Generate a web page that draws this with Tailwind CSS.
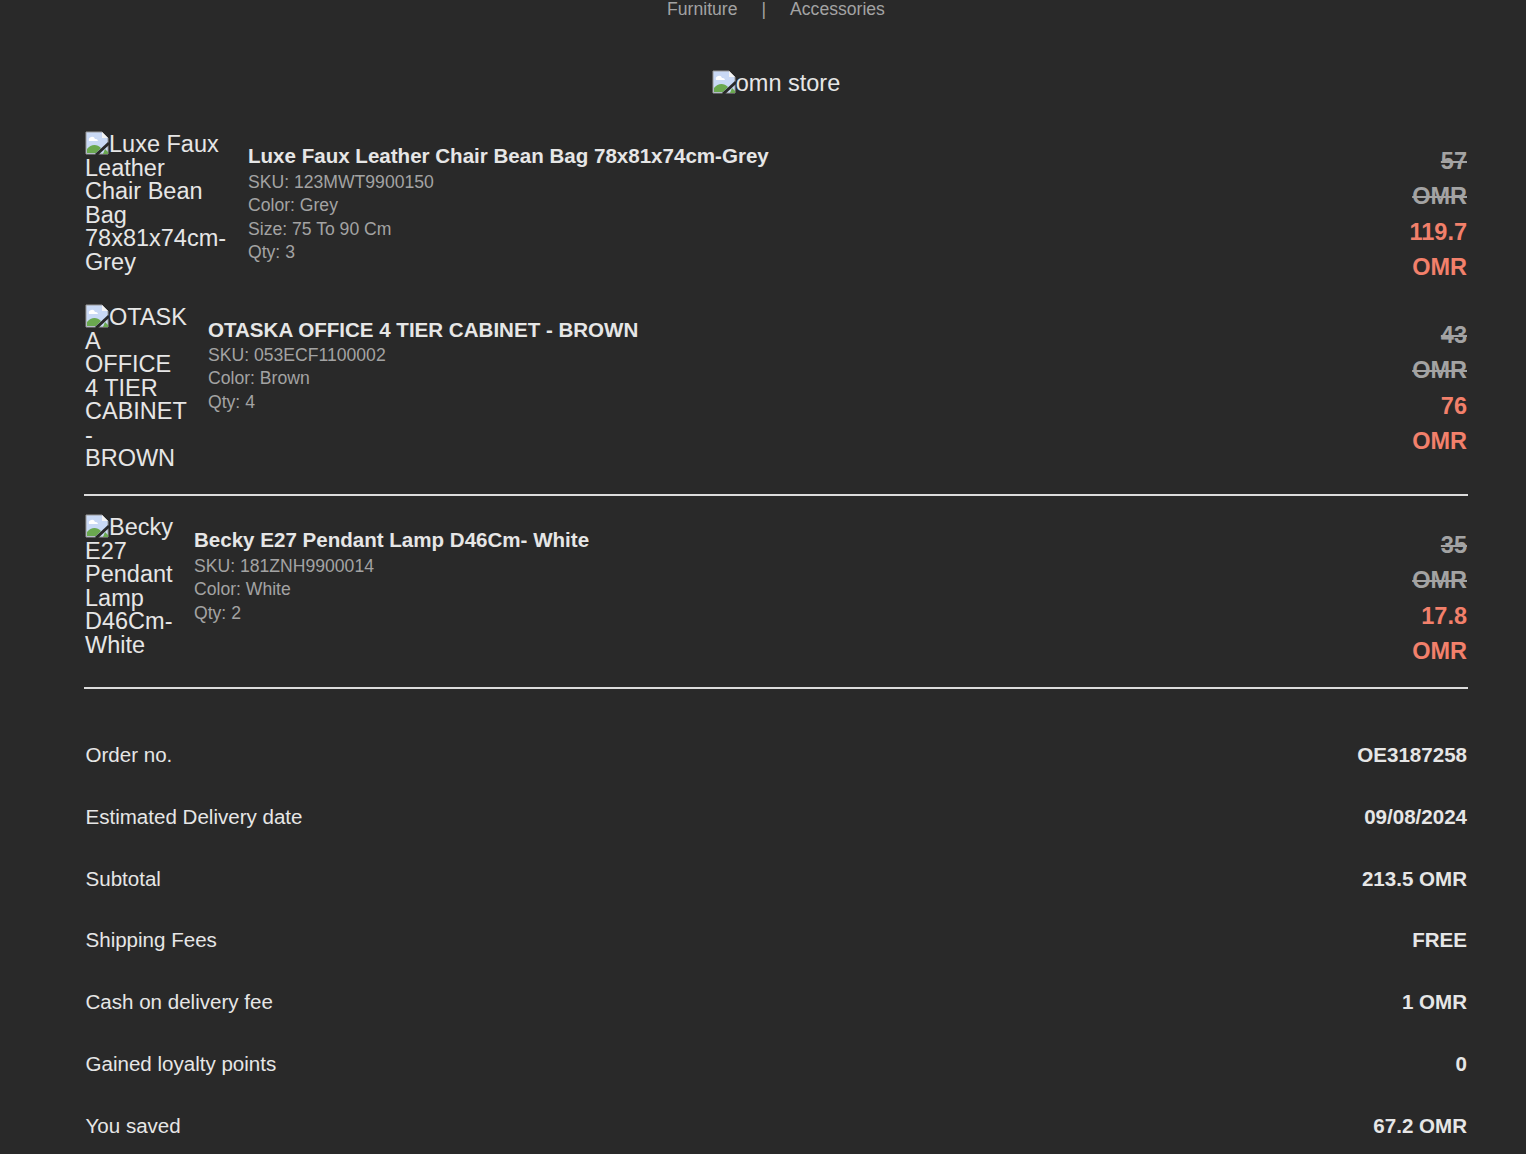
<!DOCTYPE html>
<html lang="en">
<head>
    <meta charset="UTF-8">
    <meta name="viewport" content="width=device-width, initial-scale=1.0">
    <title>Order summary</title>
    <script src="https://cdn.jsdelivr.net/npm/@tailwindcss/browser@4"></script>
</head>
<body class="bg-[#292929] font-['Liberation_Sans',Arial,sans-serif] h-[1154px] overflow-hidden">
    <div class="pl-[84px] pr-[58px]">
        <!-- nav -->
        <div class="flex justify-center text-[17.6px] leading-[18px] text-[#a3a3a3] h-[18px]">
            <span>Furniture</span>
            <span class="mx-[24px]">|</span>
            <span>Accessories</span>
        </div>

        <!-- logo -->
        <div class="mt-[52px] flex justify-center text-[23.5px] leading-[27px] text-[#e6e6e6] h-[27px]">
            <span><svg class="inline-block align-[-3px] w-[24px] h-[24px]" viewBox="0 0 24 24"><path d="M1 1H17L23 7V23H1Z" fill="#c9d9f5" stroke="#9a9a9a"/><path d="M17 1V7H23Z" fill="#f4f4f4"/><path d="M4 10a3 3 0 0 1 6-2 2.500 2.500 0 0 1 3 2Z" fill="#fff"/><path d="M2 22V18C6 13 12 13 16 17L11 22Z" fill="#6aa84f"/><path d="M20 18L23 21V23H18Z" fill="#6aa84f"/><path d="M11 24L24 12" stroke="#292929" stroke-width="3"/></svg>omn store</span>
        </div>

        <!-- items -->
        <div class="mt-[34px] flex items-start pl-[1px] pr-[1px] h-[175px]">
            <div class="w-[142px] mr-[21px] shrink-0 text-[23.5px] leading-[23.5px] text-[#e6e6e6]"><svg class="inline-block align-[-3px] w-[24px] h-[24px]" viewBox="0 0 24 24"><path d="M1 1H17L23 7V23H1Z" fill="#c9d9f5" stroke="#9a9a9a"/><path d="M17 1V7H23Z" fill="#f4f4f4"/><path d="M4 10a3 3 0 0 1 6-2 2.500 2.500 0 0 1 3 2Z" fill="#fff"/><path d="M2 22V18C6 13 12 13 16 17L11 22Z" fill="#6aa84f"/><path d="M20 18L23 21V23H18Z" fill="#6aa84f"/><path d="M11 24L24 12" stroke="#292929" stroke-width="3"/></svg>Luxe Faux Leather Chair Bean Bag 78x81x74cm-Grey</div>
            <div class="flex-1 pt-[12px]">
                <div class="text-[20.55px] leading-[25px] font-bold text-[#e6e6e6]">Luxe Faux Leather Chair Bean Bag 78x81x74cm-Grey</div>
                <div class="text-[17.6px] leading-[23.4px] text-[#a3a3a3] mt-[3px]">
                    <div>SKU: 123MWT9900150</div>
                    <div>Color: Grey</div>
                    <div>Size: 75 To 90 Cm</div>
                    <div>Qty: 3</div>
                </div>
            </div>
            <div class="pt-[13px] text-right font-bold text-[23.5px] leading-[35.3px]">
                <div class="line-through text-[#a3a3a3]">57<br>OMR</div>
                <div class="text-[#f2806b]">119.7<br>OMR</div>
            </div>
        </div>

        <div class="flex items-start pl-[1px] pr-[1px] h-[190px] border-b-2 border-[#dcdcdc]">
            <div class="w-[102px] mr-[21px] mt-[-2px] shrink-0 text-[23.5px] leading-[23.5px] text-[#e6e6e6]"><svg class="inline-block align-[-3px] w-[24px] h-[24px]" viewBox="0 0 24 24"><path d="M1 1H17L23 7V23H1Z" fill="#c9d9f5" stroke="#9a9a9a"/><path d="M17 1V7H23Z" fill="#f4f4f4"/><path d="M4 10a3 3 0 0 1 6-2 2.500 2.500 0 0 1 3 2Z" fill="#fff"/><path d="M2 22V18C6 13 12 13 16 17L11 22Z" fill="#6aa84f"/><path d="M20 18L23 21V23H18Z" fill="#6aa84f"/><path d="M11 24L24 12" stroke="#292929" stroke-width="3"/></svg>OTASK<wbr>A OFFICE 4 TIER CABINET - BROWN</div>
            <div class="flex-1 pt-[11px]">
                <div class="text-[20.55px] leading-[25px] font-bold text-[#e6e6e6]">OTASKA OFFICE 4 TIER CABINET - BROWN</div>
                <div class="text-[17.6px] leading-[23.4px] text-[#a3a3a3] mt-[2px]">
                    <div>SKU: 053ECF1100002</div>
                    <div>Color: Brown</div>
                    <div>Qty: 4</div>
                </div>
            </div>
            <div class="pt-[12px] text-right font-bold text-[23.5px] leading-[35.3px]">
                <div class="line-through text-[#a3a3a3]">43<br>OMR</div>
                <div class="text-[#f2806b]">76<br>OMR</div>
            </div>
        </div>

        <div class="flex items-start pt-[20px] pl-[1px] pr-[1px] h-[193px] border-b-2 border-[#dcdcdc]">
            <div class="w-[88px] mr-[21px] mt-[-2px] shrink-0 text-[23.5px] leading-[23.5px] text-[#e6e6e6]"><svg class="inline-block align-[-3px] w-[24px] h-[24px]" viewBox="0 0 24 24"><path d="M1 1H17L23 7V23H1Z" fill="#c9d9f5" stroke="#9a9a9a"/><path d="M17 1V7H23Z" fill="#f4f4f4"/><path d="M4 10a3 3 0 0 1 6-2 2.500 2.500 0 0 1 3 2Z" fill="#fff"/><path d="M2 22V18C6 13 12 13 16 17L11 22Z" fill="#6aa84f"/><path d="M20 18L23 21V23H18Z" fill="#6aa84f"/><path d="M11 24L24 12" stroke="#292929" stroke-width="3"/></svg>Becky E27 Pendant Lamp D46Cm-White</div>
            <div class="flex-1 pt-[11px]">
                <div class="text-[20.55px] leading-[25px] font-bold text-[#e6e6e6]">Becky E27 Pendant Lamp D46Cm- White</div>
                <div class="text-[17.6px] leading-[23.4px] text-[#a3a3a3] mt-[3px]">
                    <div>SKU: 181ZNH9900014</div>
                    <div>Color: White</div>
                    <div>Qty: 2</div>
                </div>
            </div>
            <div class="pt-[12px] text-right font-bold text-[23.5px] leading-[35.3px]">
                <div class="line-through text-[#a3a3a3]">35<br>OMR</div>
                <div class="text-[#f2806b]">17.8<br>OMR</div>
            </div>
        </div>

        <!-- summary -->
        <div class="mt-[35px] pl-[1.5px] pr-[1px] text-[20.55px] leading-[61.8px] text-[#e6e6e6]">
            <div class="flex justify-between"><span>Order no.</span><span class="font-bold">OE3187258</span></div>
            <div class="flex justify-between"><span>Estimated Delivery date</span><span class="font-bold">09/08/2024</span></div>
            <div class="flex justify-between"><span>Subtotal</span><span class="font-bold">213.5 OMR</span></div>
            <div class="flex justify-between"><span>Shipping Fees</span><span class="font-bold">FREE</span></div>
            <div class="flex justify-between"><span>Cash on delivery fee</span><span class="font-bold">1 OMR</span></div>
            <div class="flex justify-between"><span>Gained loyalty points</span><span class="font-bold">0</span></div>
            <div class="flex justify-between"><span>You saved</span><span class="font-bold">67.2 OMR</span></div>
        </div>
    </div>
</body>
</html>
